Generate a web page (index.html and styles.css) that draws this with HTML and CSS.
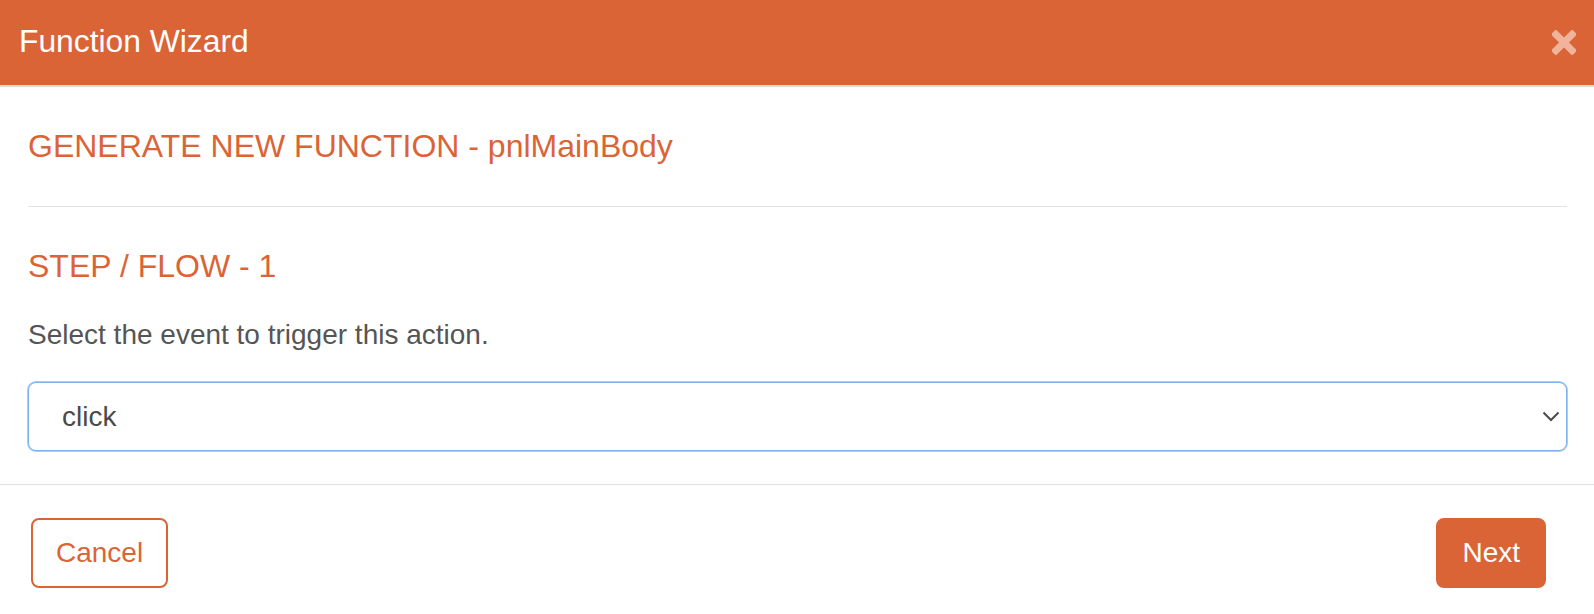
FILE: index.html
```html
<!DOCTYPE html>
<html lang="en">
<head>
<meta charset="utf-8">
<title>Function Wizard</title>
<link rel="stylesheet" href="styles.css">
</head>
<body>
<div class="modal">
  <header class="modal-header">
    <h1 class="modal-title">Function Wizard</h1>
    <button class="close" type="button" aria-label="Close">
      <svg width="24" height="25" viewBox="0 0 24 25" aria-hidden="true">
        <g fill="currentColor">
          <rect x="-3" y="9" width="30" height="7" transform="rotate(45 12 12.5)"/>
          <rect x="-3" y="9" width="30" height="7" transform="rotate(-45 12 12.5)"/>
        </g>
      </svg>
    </button>
  </header>
  <main class="modal-body">
    <h2 class="section-title">GENERATE NEW FUNCTION - pnlMainBody</h2>
    <hr class="divider">
    <h2 class="section-title step">STEP / FLOW - 1</h2>
    <p class="hint">Select the event to trigger this action.</p>
    <div class="select-wrap">
      <select class="event-select">
        <option selected>click</option>
        <option>dblclick</option>
        <option>mouseover</option>
        <option>change</option>
      </select>
      <svg class="chevron" width="18" height="11" viewBox="0 0 18 11" aria-hidden="true">
        <path d="M1.5 1.5 L9 9 L16.5 1.5" fill="none" stroke="#4a4a4a" stroke-width="2"/>
      </svg>
    </div>
  </main>
  <footer class="modal-footer">
    <button class="btn btn-outline" type="button">Cancel</button>
    <button class="btn btn-primary" type="button">Next</button>
  </footer>
</div>
</body>
</html>
```

FILE: styles.css
```css
* {
  box-sizing: border-box;
}

html, body {
  margin: 0;
  padding: 0;
  background: #ffffff;
}

body {
  font-family: "Liberation Sans", Arial, Helvetica, sans-serif;
  color: #555555;
}

.modal {
  width: 100%;
  display: flex;
  flex-direction: column;
}

.modal-header {
  height: 87px;
  background: #db6437;
  border-bottom: 2px solid #dddddd;
  display: flex;
  align-items: center;
  justify-content: space-between;
  padding: 0 18px 3px 19px;
}

.modal-title {
  margin: 0;
  font-size: 31.8px;
  font-weight: normal;
  color: #ffffff;
  line-height: 1.1;
}

.close {
  border: 0;
  background: transparent;
  padding: 0;
  margin: 0;
  color: #f1b39b;
  display: flex;
  cursor: pointer;
  margin-top: 3px;
}

.modal-body {
  padding: 42px 27px 33px 28px;
}

.section-title {
  margin: 0;
  font-size: 32px;
  font-weight: normal;
  line-height: 35px;
  color: #db6437;
}

.divider {
  border: 0;
  border-top: 1px solid #e3e3e3;
  margin: 42px 0 42px 0;
  height: 0;
}

.hint {
  margin: 31px 0 27px 0;
  font-size: 28px;
  line-height: 40px;
  color: #555555;
}

.select-wrap {
  position: relative;
}

.event-select {
  appearance: none;
  -webkit-appearance: none;
  width: 100%;
  height: 69px;
  padding: 0 60px 0 33px;
  font-family: "Liberation Sans", Arial, Helvetica, sans-serif;
  font-size: 28px;
  color: #4a4a4a;
  background: #ffffff;
  border: 1px solid #7fb1f2;
  border-radius: 8px;
  box-shadow: 0 0 0 1px #a9cbf6;
  outline: none;
}

.chevron {
  position: absolute;
  right: 7px;
  top: 29px;
  pointer-events: none;
}

.modal-footer {
  border-top: 1px solid #dee2e6;
  display: flex;
  justify-content: space-between;
  align-items: center;
  padding: 33px 48px 27px 31px;
}

.btn {
  height: 70px;
  padding: 0 24px;
  font-family: "Liberation Sans", Arial, Helvetica, sans-serif;
  font-size: 28px;
  border-radius: 8px;
  cursor: pointer;
}

.btn-outline {
  padding: 0 23px;
  background: #ffffff;
  color: #db6437;
  border: 2px solid #db6437;
}

.btn-primary {
  background: #db6437;
  color: #ffffff;
  border: 2px solid #db6437;
}
```
